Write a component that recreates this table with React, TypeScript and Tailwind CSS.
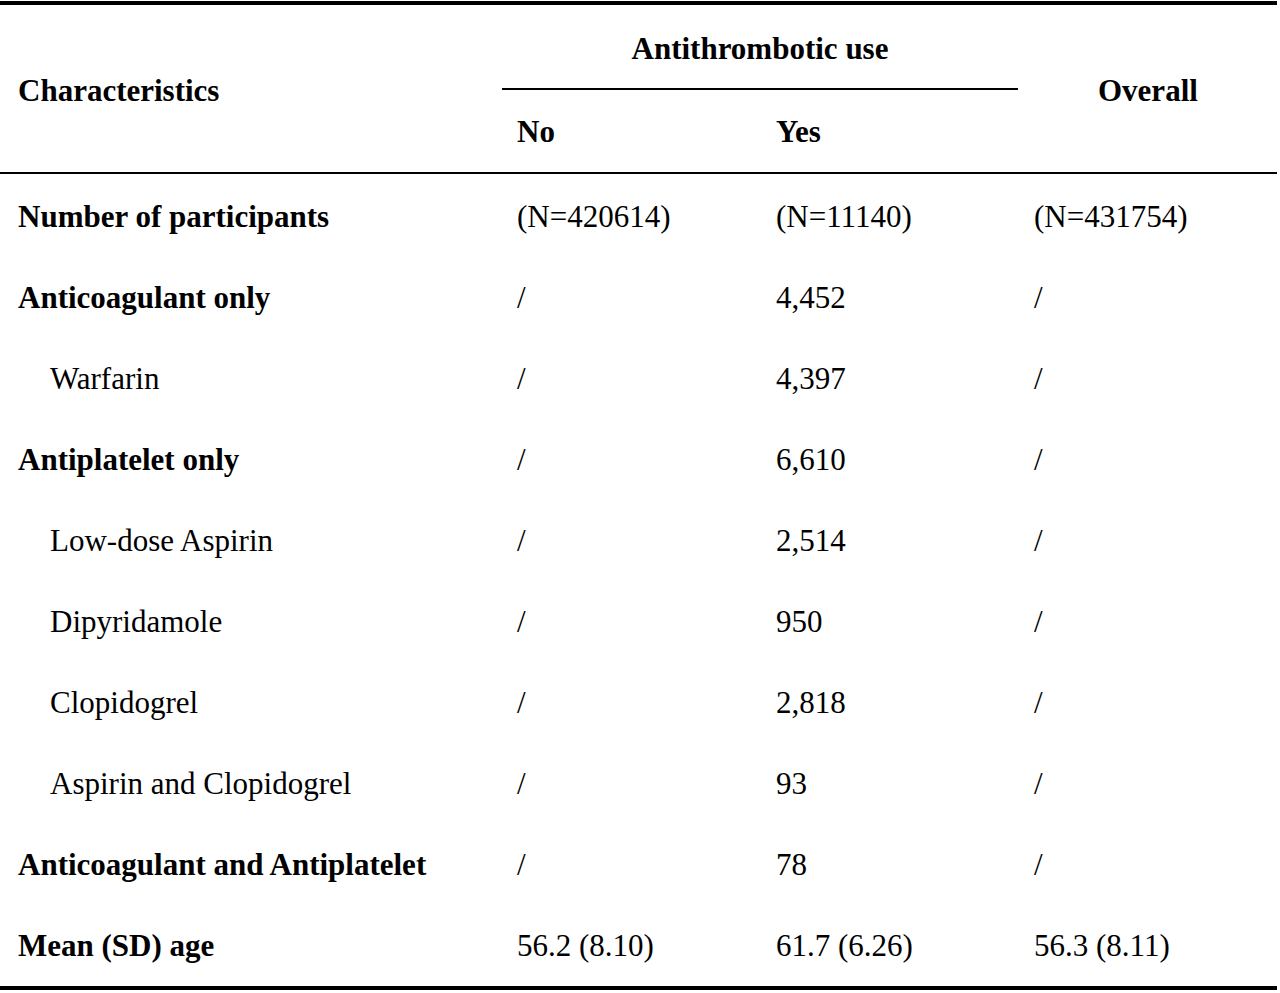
import React from 'react'

const rows = [
  { label: 'Number of participants', bold: true, no: '(N=420614)', yes: '(N=11140)', all: '(N=431754)' },
  { label: 'Anticoagulant only', bold: true, no: '/', yes: '4,452', all: '/' },
  { label: 'Warfarin', bold: false, no: '/', yes: '4,397', all: '/' },
  { label: 'Antiplatelet only', bold: true, no: '/', yes: '6,610', all: '/' },
  { label: 'Low-dose Aspirin', bold: false, no: '/', yes: '2,514', all: '/' },
  { label: 'Dipyridamole', bold: false, no: '/', yes: '950', all: '/' },
  { label: 'Clopidogrel', bold: false, no: '/', yes: '2,818', all: '/' },
  { label: 'Aspirin and Clopidogrel', bold: false, no: '/', yes: '93', all: '/' },
  { label: 'Anticoagulant and Antiplatelet', bold: true, no: '/', yes: '78', all: '/' },
  { label: 'Mean (SD) age', bold: true, no: '56.2 (8.10)', yes: '61.7 (6.26)', all: '56.3 (8.11)' },
]

const App = () => {
  return (
    <div className="w-[1280px] h-[993px] bg-white text-black text-[31px] leading-[36px] font-['Liberation_Serif',serif]">
      <div className="w-[1277px] mt-[1px] border-t-4 border-black">
        <div className="grid grid-cols-[499px_259px_258px_1fr] grid-rows-[83px_2px_82px] pl-[18px]">
          <div className="row-span-3 self-center font-bold pt-[4px]">Characteristics</div>
          <div className="col-span-2 ml-[-15px] mr-[16px] flex items-center justify-center font-bold pt-[4px]">
            Antithrombotic use
          </div>
          <div className="row-span-3 self-center font-bold pl-[64px] pt-[4px]">Overall</div>
          <div className="col-span-2 ml-[-15px] mr-[16px] bg-black"></div>
          <div className="flex items-center font-bold pt-[2px]">No</div>
          <div className="flex items-center font-bold pt-[2px]">Yes</div>
        </div>
        <div className="border-t-2 border-black pt-[2px] border-b-4">
          {rows.map((r, i) => (
            <div key={i} className="grid grid-cols-[499px_259px_258px_1fr] h-[81px] items-center pl-[18px]">
              <div className={r.bold ? 'font-bold' : 'pl-[32px]'}>{r.label}</div>
              <div>{r.no}</div>
              <div>{r.yes}</div>
              <div>{r.all}</div>
            </div>
          ))}
        </div>
      </div>
    </div>
  )
}

export default App
